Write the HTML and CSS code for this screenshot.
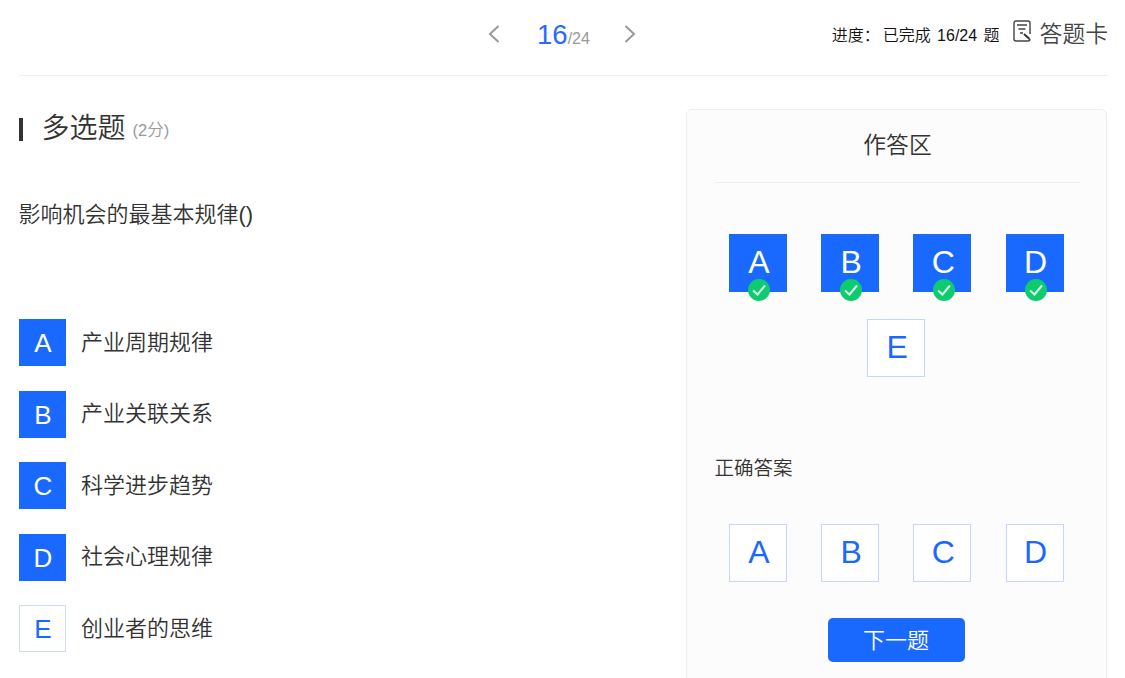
FILE: index.html
```html
<!DOCTYPE html>
<html lang="zh">
<head>
<meta charset="utf-8">
<title>多选题</title>
<link rel="stylesheet" href="styles.css">
</head>
<body>
<div class="page">
  <header class="topbar">
    <div class="topbar-side"></div>
    <nav class="pager">
      <svg class="chev" viewBox="0 0 14 20"><path d="M11.5 2 3 10l8.500 8"/></svg>
      <div class="pager-count"><span class="pager-now">16</span><span class="pager-total">/24</span></div>
      <svg class="chev" viewBox="0 0 14 20"><path d="M2.500 2 11 10l-8.500 8"/></svg>
    </nav>
    <div class="topbar-side topbar-right">
      <span class="progress"><span class="progress-label">进度：</span>已完成 16/24 题</span>
      <svg class="card-icon" viewBox="0 0 18 22"><path d="M17 14V3a2 2 0 0 0-2-2H3a2 2 0 0 0-2 2v16a2 2 0 0 0 2 2h12a2 2 0 0 0 2-2"/><path d="M4 5h10M5.500 9h7M7 13h3"/><path class="card-icon-slash" d="m11 14 5.500 5"/></svg>
      <span class="card-label">答题卡</span>
    </div>
  </header>
  <main class="content">
    <section class="question">
      <h1 class="q-type"><span class="q-type-name">多选题</span><span class="q-score">(2分)</span></h1>
      <p class="q-text">影响机会的最基本规律()</p>
      <ul class="options">
        <li class="option"><span class="opt-key is-on">A</span><span class="opt-text">产业周期规律</span></li>
        <li class="option"><span class="opt-key is-on">B</span><span class="opt-text">产业关联关系</span></li>
        <li class="option"><span class="opt-key is-on">C</span><span class="opt-text">科学进步趋势</span></li>
        <li class="option"><span class="opt-key is-on">D</span><span class="opt-text">社会心理规律</span></li>
        <li class="option"><span class="opt-key">E</span><span class="opt-text">创业者的思维</span></li>
      </ul>
    </section>
    <aside class="panel">
      <h2 class="panel-title">作答区</h2>
      <div class="choices">
        <div class="choice is-on">A<svg class="tick" viewBox="0 0 22 22"><circle cx="11" cy="11" r="11"/><path d="M5 11.500 9.500 15.500 17 6.500"/></svg></div>
        <div class="choice is-on">B<svg class="tick" viewBox="0 0 22 22"><circle cx="11" cy="11" r="11"/><path d="M5 11.500 9.500 15.500 17 6.500"/></svg></div>
        <div class="choice is-on">C<svg class="tick" viewBox="0 0 22 22"><circle cx="11" cy="11" r="11"/><path d="M5 11.500 9.500 15.500 17 6.500"/></svg></div>
        <div class="choice is-on">D<svg class="tick" viewBox="0 0 22 22"><circle cx="11" cy="11" r="11"/><path d="M5 11.500 9.500 15.500 17 6.500"/></svg></div>
        <div class="choice">E</div>
      </div>
      <h3 class="answer-title">正确答案</h3>
      <div class="choices answer">
        <div class="choice">A</div>
        <div class="choice">B</div>
        <div class="choice">C</div>
        <div class="choice">D</div>
      </div>
      <div class="actions"><button class="next" type="button">下一题</button></div>
    </aside>
  </main>
</div>
</body>
</html>
```
FILE: styles.css
```css
* { box-sizing: border-box; }
html, body { margin: 0; height: 678px; overflow: hidden; background: #fff; }
body { font-family: "Liberation Sans", "Noto Sans CJK SC", sans-serif; font-weight: 350; color: #333; }
.page { padding: 0 17px 0 19px; }
.topbar { display: grid; grid-template-columns: 1fr auto 1fr; align-items: center; height: 76px; border-bottom: 1px solid #eee; }
.pager { display: flex; align-items: center; width: 150px; justify-content: space-between; margin-left: -3px; }
.chev { width: 14px; height: 20px; margin-top: -7px; }
.chev path { fill: none; stroke: #999; stroke-width: 2; }
.pager-count { margin-top: -5px; margin-left: 3px; }
.pager-now { font-size: 27.500px; color: #2a69ff; }
.pager-total { font-size: 16px; color: #999; }
.topbar-right { display: flex; align-items: center; justify-content: flex-end; margin-top: -10px; }
.progress { font-size: 16px; color: #111; margin-top: 3px; word-spacing: 2px; }
.progress-label { margin-right: 3px; }
.card-icon { width: 18px; height: 22px; margin-left: 13px; margin-top: -4px; }
.card-icon path { fill: none; stroke: #444; stroke-width: 1.4; }
.card-icon .card-icon-slash { stroke-width: 2; stroke: #333; }
.card-label { font-size: 22.800px; margin-left: 9px; color: #444; }
.content { display: flex; align-items: flex-start; padding-top: 33px; }
.question { flex: 1; }
.q-type { margin: -2px 0 0; display: flex; align-items: center; height: 37px; font-weight: 350; position: relative; padding-left: 22.500px; }
.q-type::before { content: ""; position: absolute; left: 0; top: 11px; width: 4px; height: 23px; background: #333; }
.q-type-name { font-size: 28px; }
.q-score { font-size: 16.500px; color: #999; margin-left: 7px; margin-top: 6px; }
.q-text { margin: 0 0 0 -0.500px; padding-top: 55px; font-size: 22px; line-height: 32px; }
.options { list-style: none; margin: 88px 0 0; padding: 0; display: flex; flex-direction: column; gap: 24.500px; }
.option { display: flex; align-items: center; font-size: 22px; gap: 15px; }
.opt-text { margin-top: -6px; }
.opt-key { width: 47px; height: 47px; display: flex; align-items: center; justify-content: center; padding: 2px 0 0 1px; font-size: 26px; color: #1a69ff; background: #fff; border: 1px solid #d0dcf5; }
.opt-key.is-on { background: #1a69ff; color: #fff; border-color: #1a69ff; }
.panel { width: 421px; height: 640px; margin-right: 1px; padding: 0 26px 0 28px; background: #fcfcfc; border: 1px solid #eee; border-radius: 6px; }
.panel-title { margin: 0; height: 73px; padding-top: 17px; text-align: center; font-size: 22.800px; font-weight: 350; line-height: 36px; border-bottom: 1px solid #eee; }
.choices { display: flex; flex-wrap: wrap; justify-content: center; gap: 27px 34.250px; margin: 51px 2.500px 0 0; }
.choice { position: relative; width: 58px; height: 58px; display: flex; align-items: center; justify-content: center; padding: 0 0 2px 2px; font-size: 32px; color: #1a69ff; background: #fff; border: 1px solid #c3d7ff; }
.choice.is-on { background: #1a69ff; color: #fff; border-color: #1a69ff; }
.tick { position: absolute; left: 18.300px; top: 44px; width: 22px; height: 22px; }
.tick circle { fill: #0fcb70; }
.tick path { fill: none; stroke: #fff; stroke-opacity: .85; stroke-width: 2; }
.answer-title { margin: 76px 0 0 -0.500px; font-size: 19.500px; font-weight: 350; line-height: 30px; }
.answer { margin-top: 41px; }
.actions { display: flex; justify-content: center; margin: 36px 3px 0 0; }
.next { width: 137px; height: 44px; padding: 0 0 5px; border: 0; border-radius: 5px; background: #1a69ff; color: #fff; font: inherit; font-size: 22px; }
```
